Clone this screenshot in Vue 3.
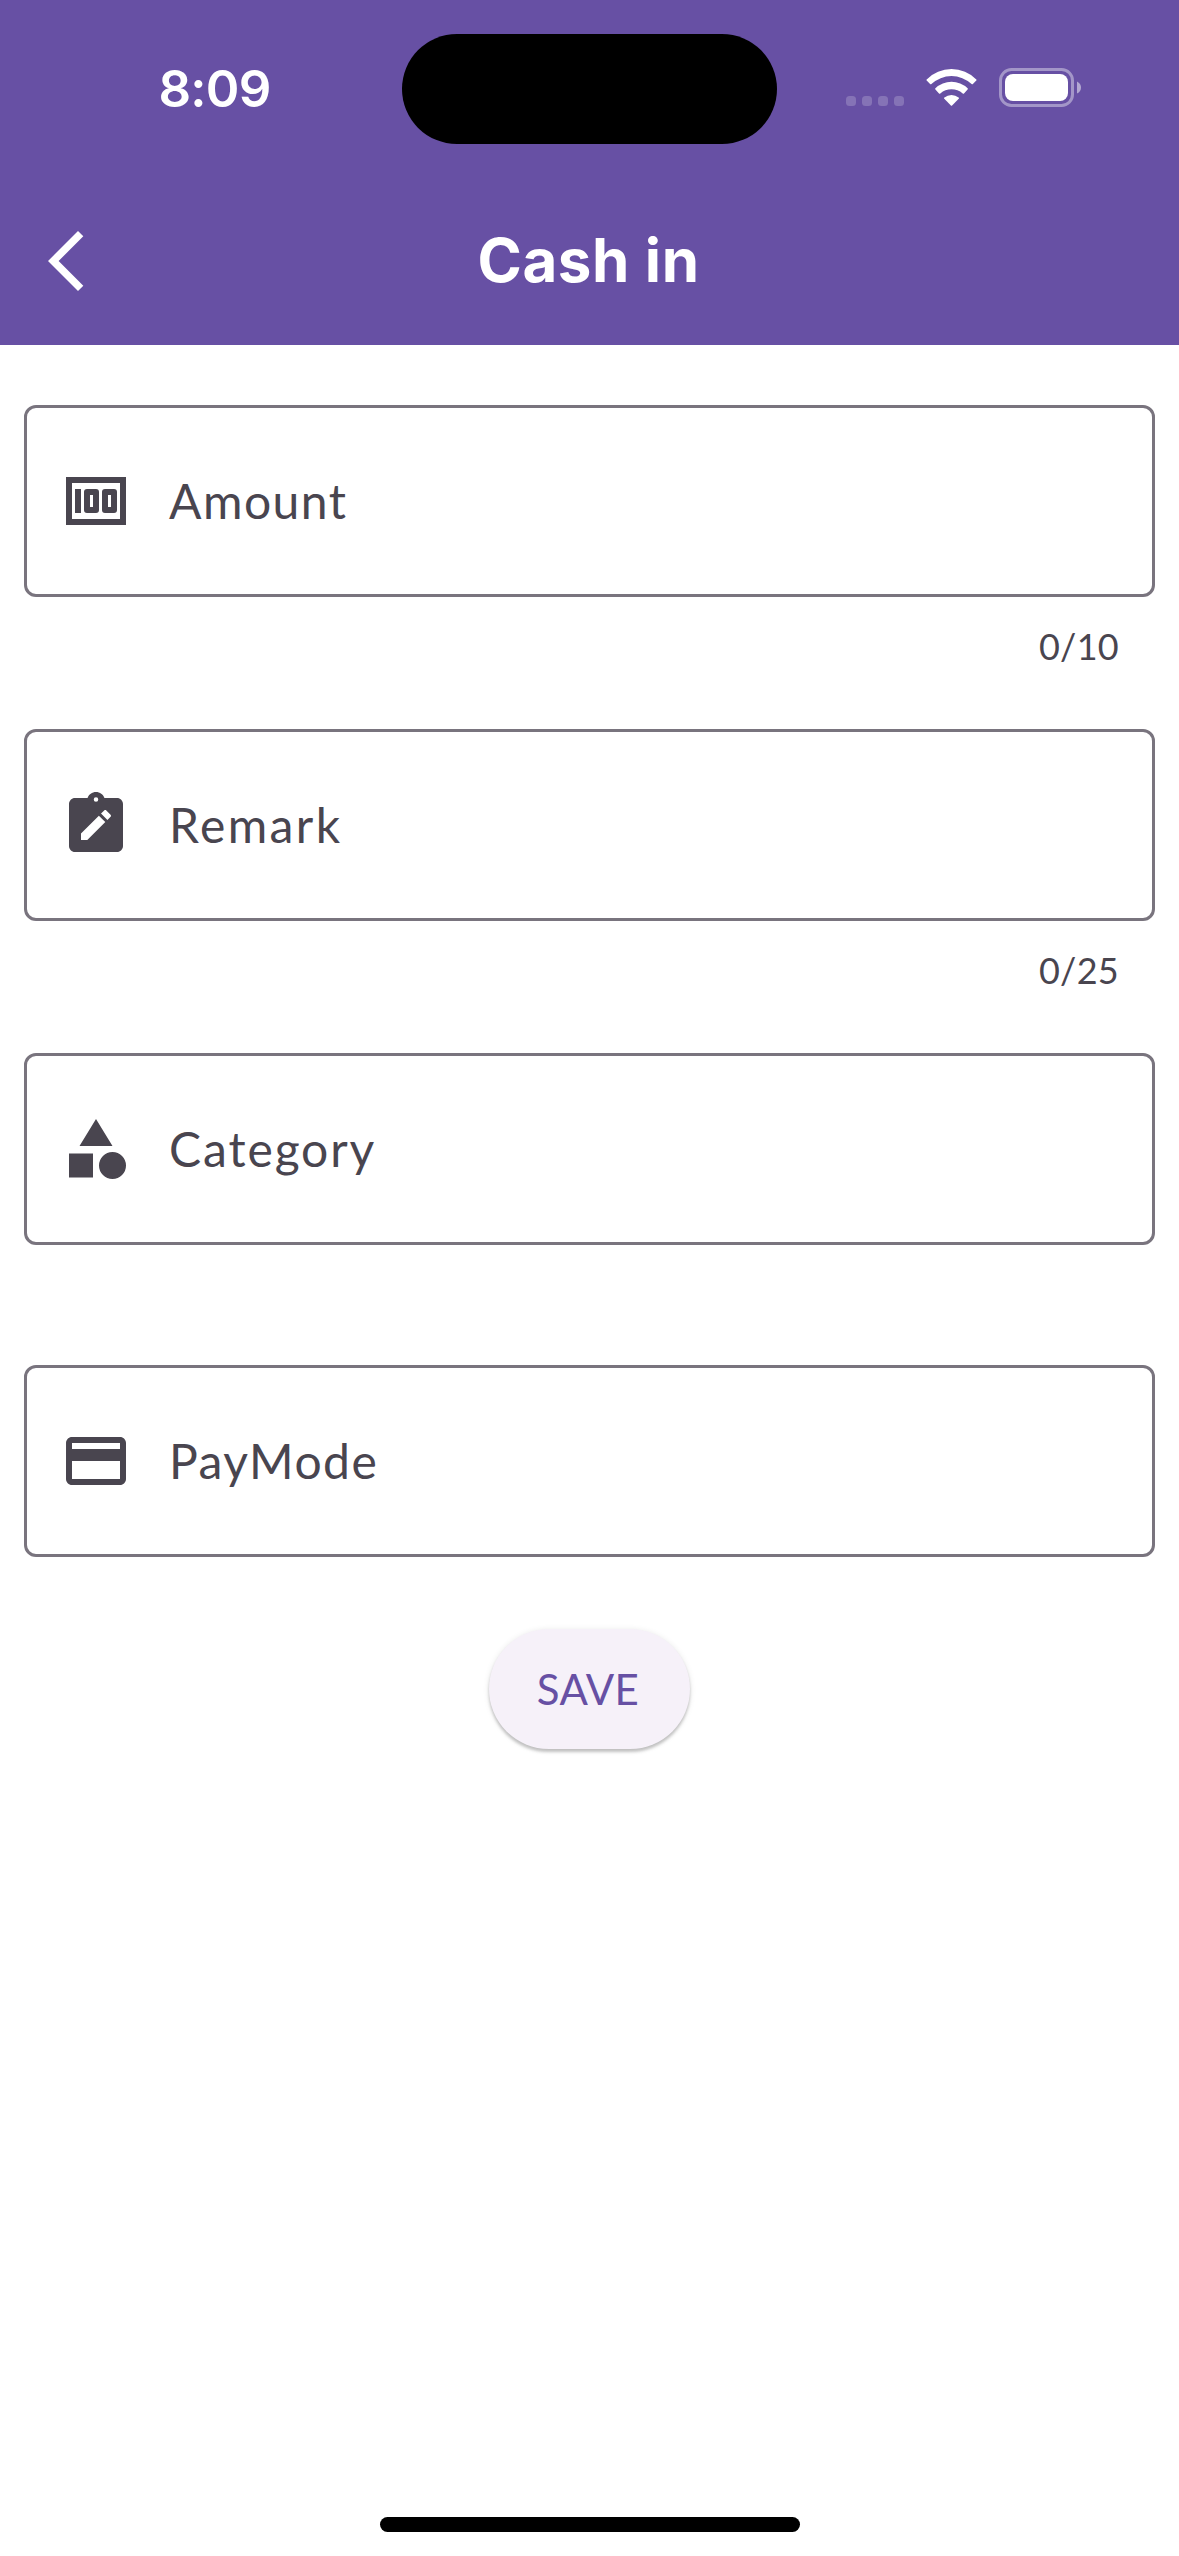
<script setup>
const fields = [
  { id: 'amount', label: 'Amount', counter: '0/10' },
  { id: 'remark', label: 'Remark', counter: '0/25' },
  { id: 'category', label: 'Category' },
  { id: 'paymode', label: 'PayMode' },
]

const icons = {
  amount: 'M2 4H22V20H2ZM4 6V18H20V6ZM5 8H7V16H5ZM9 8H12Q13 8 13 9V15Q13 16 12 16H9Q8 16 8 15V9Q8 8 9 8ZM10 10V14H11V10ZM15 8H18Q19 8 19 9V15Q19 16 18 16H15Q14 16 14 15V9Q14 8 15 8ZM16 10V14H17V10Z',
  remark: 'M19 3H14.82C14.4 1.84 13.3 1 12 1S9.6 1.84 9.18 3H5C3.9 3 3 3.9 3 5V19C3 20.1 3.9 21 5 21H19C20.1 21 21 20.1 21 19V5C21 3.9 20.1 3 19 3ZM12 2.75A.75.75 0 0 1 12 4.25A.75.75 0 0 1 12 2.75ZM9.1 17H7V14.86L12.96 8.9L15.1 11.02ZM16.85 9.27L15.81 10.31L13.67 8.19L14.73 7.15C14.93 6.95 15.24 6.95 15.44 7.15L16.85 8.56C17.05 8.76 17.05 9.07 16.85 9.27Z',
  category: 'M12 2L17.5 11H6.5ZM3 13.5H11V21.5H3ZM17.5 13A4.5 4.5 0 0 1 17.5 22A4.5 4.5 0 0 1 17.5 13Z',
  paymode: 'M20 4H4C2.89 4 2.01 4.89 2.01 6L2 18C2 19.11 2.89 20 4 20H20C21.11 20 22 19.11 22 18V6C22 4.89 21.11 4 20 4ZM20 18H4V12H20ZM20 8H4V6H20Z',
}
</script>

<template>
  <div class="screen">
    <header class="header">
      <div class="status">
        <div class="time">8:09</div>
        <div class="island"></div>
        <div class="indicators">
          <div class="dots"><i v-for="n in 4" :key="n"></i></div>
          <svg class="wifi" viewBox="0 0 51 37" fill="#fff">
            <path d="M.7 10.4A35 35 0 0 1 50.3 10.4Q50.9 11 50.3 11.6L46.9 15Q46.3 15.6 45.6 15A29.5 29.5 0 0 0 5.4 15Q4.7 15.6 4.1 15L.7 11.6Q.1 11 .7 10.4Z" />
            <path d="M9.4 19.2A23.5 23.5 0 0 1 41.6 19.2Q42.2 19.8 41.6 20.4L38 24.4Q37.4 25 36.7 24.4A17.5 17.5 0 0 0 14.3 24.4Q13.6 25 13 24.4L9.4 20.4Q8.8 19.8 9.4 19.2Z" />
            <path d="M18.4 28.5A11 11 0 0 1 32.6 28.5Q33.3 29.1 32.7 29.8L26.1 36.5Q25.5 37.1 24.9 36.5L18.3 29.8Q17.7 29.1 18.4 28.5Z" />
          </svg>
          <svg class="battery" viewBox="0 0 82 39">
            <rect x="1.5" y="1.5" width="72" height="36" rx="11" fill="none" stroke="#fff" stroke-opacity=".4" stroke-width="3" />
            <rect x="6" y="6" width="63" height="27" rx="8" fill="#fff" />
            <path d="M78 13.5Q82 15.5 82 19.5T78 25.5Z" fill="#fff" fill-opacity=".5" />
          </svg>
        </div>
      </div>
      <div class="toolbar">
        <svg class="back" viewBox="0 0 24 24" fill="#fff"><path d="M17.77 3.77L16 2L6 12L16 22L17.77 20.23L9.54 12Z" /></svg>
        <h1>Cash in</h1>
      </div>
    </header>

    <main class="form">
      <div v-for="f in fields" :key="f.id" class="field" :class="[f.id, { counted: f.counter }]">
        <div class="box">
          <svg viewBox="0 0 24 24"><path :d="icons[f.id]" fill="#49454f" fill-rule="evenodd" /></svg>
          <span>{{ f.label }}</span>
        </div>
        <div v-if="f.counter" class="counter">{{ f.counter }}</div>
      </div>
      <button class="save">SAVE</button>
    </main>

    <div class="home"></div>
  </div>
</template>

<style>
body {
  margin: 0;
  background: #fff;
}
</style>

<style scoped>
.screen {
  width: 1179px;
  height: 2556px;
  display: flex;
  flex-direction: column;
  overflow: hidden;
  background: #fff;
  font-family: Lato, sans-serif;
  color: #49454f;
}
.header {
  height: 345px;
  flex: none;
  background: #6750a4;
  color: #fff;
  font-family: Inter, sans-serif;
}
.status {
  height: 177px;
  display: grid;
  grid-template-columns: 402px 375px 402px;
  align-items: start;
}
.time {
  padding: 58px 0 0 27px;
  text-align: center;
  font-size: 51px;
  line-height: 62px;
  font-weight: 600;
  letter-spacing: -0.8px;
}
.island {
  height: 110px;
  margin-top: 34px;
  border-radius: 55px;
  background: #000;
}
.indicators {
  display: flex;
  align-items: flex-start;
  padding: 68px 0 0 69px;
}
.dots {
  display: flex;
  gap: 6px;
  margin: 28px 22px 0 0;
}
.dots i {
  width: 10px;
  height: 10px;
  border-radius: 3.5px;
  background: rgba(255, 255, 255, 0.2);
}
.wifi {
  width: 51px;
  height: 37px;
  margin: 1px 22px 0 0;
}
.battery {
  width: 82px;
  height: 39px;
}
.toolbar {
  height: 168px;
  display: grid;
  grid-template-columns: 144px 1fr 144px;
  align-items: center;
}
.back {
  width: 72px;
  height: 72px;
  margin-left: 30px;
}
h1 {
  margin: 0;
  padding: 0 2px 2px 0;
  text-align: center;
  font-size: 60px;
  line-height: 72px;
  font-weight: 700;
  letter-spacing: 0.6px;
}
.form {
  flex: 1;
  display: flex;
  flex-direction: column;
  padding: 60px 24px 0;
}
.field {
  height: 312px;
}
.field.counted {
  height: 324px;
}
.box {
  box-sizing: border-box;
  height: 192px;
  border: 3px solid #79747e;
  border-radius: 12px;
  display: flex;
  align-items: center;
  padding-left: 33px;
}
.box svg {
  width: 72px;
  height: 72px;
  margin-right: 37px;
}
.box span {
  font-size: 48px;
  line-height: 72px;
  letter-spacing: 1.5px;
}
.remark span {
  letter-spacing: 2.4px;
}
.category span {
  letter-spacing: 1.9px;
}
.counter {
  margin-top: 25px;
  padding-right: 36px;
  text-align: right;
  font-size: 36px;
  line-height: 48px;
  letter-spacing: 0.3px;
}
.save {
  align-self: center;
  width: 201px;
  height: 120px;
  margin-top: -48px;
  padding: 0 3px 0 0;
  border: 0;
  border-radius: 60px;
  background: #f6f1f9;
  box-shadow: 0 3px 3px rgba(0, 0, 0, 0.2), 0 1px 6px rgba(0, 0, 0, 0.1);
  color: #6750a4;
  font: 400 42px/60px Lato, sans-serif;
  letter-spacing: 0.3px;
}
.home {
  width: 420px;
  height: 15px;
  margin: 0 auto 24px 380px;
  border-radius: 8px;
  background: #000;
}
</style>
